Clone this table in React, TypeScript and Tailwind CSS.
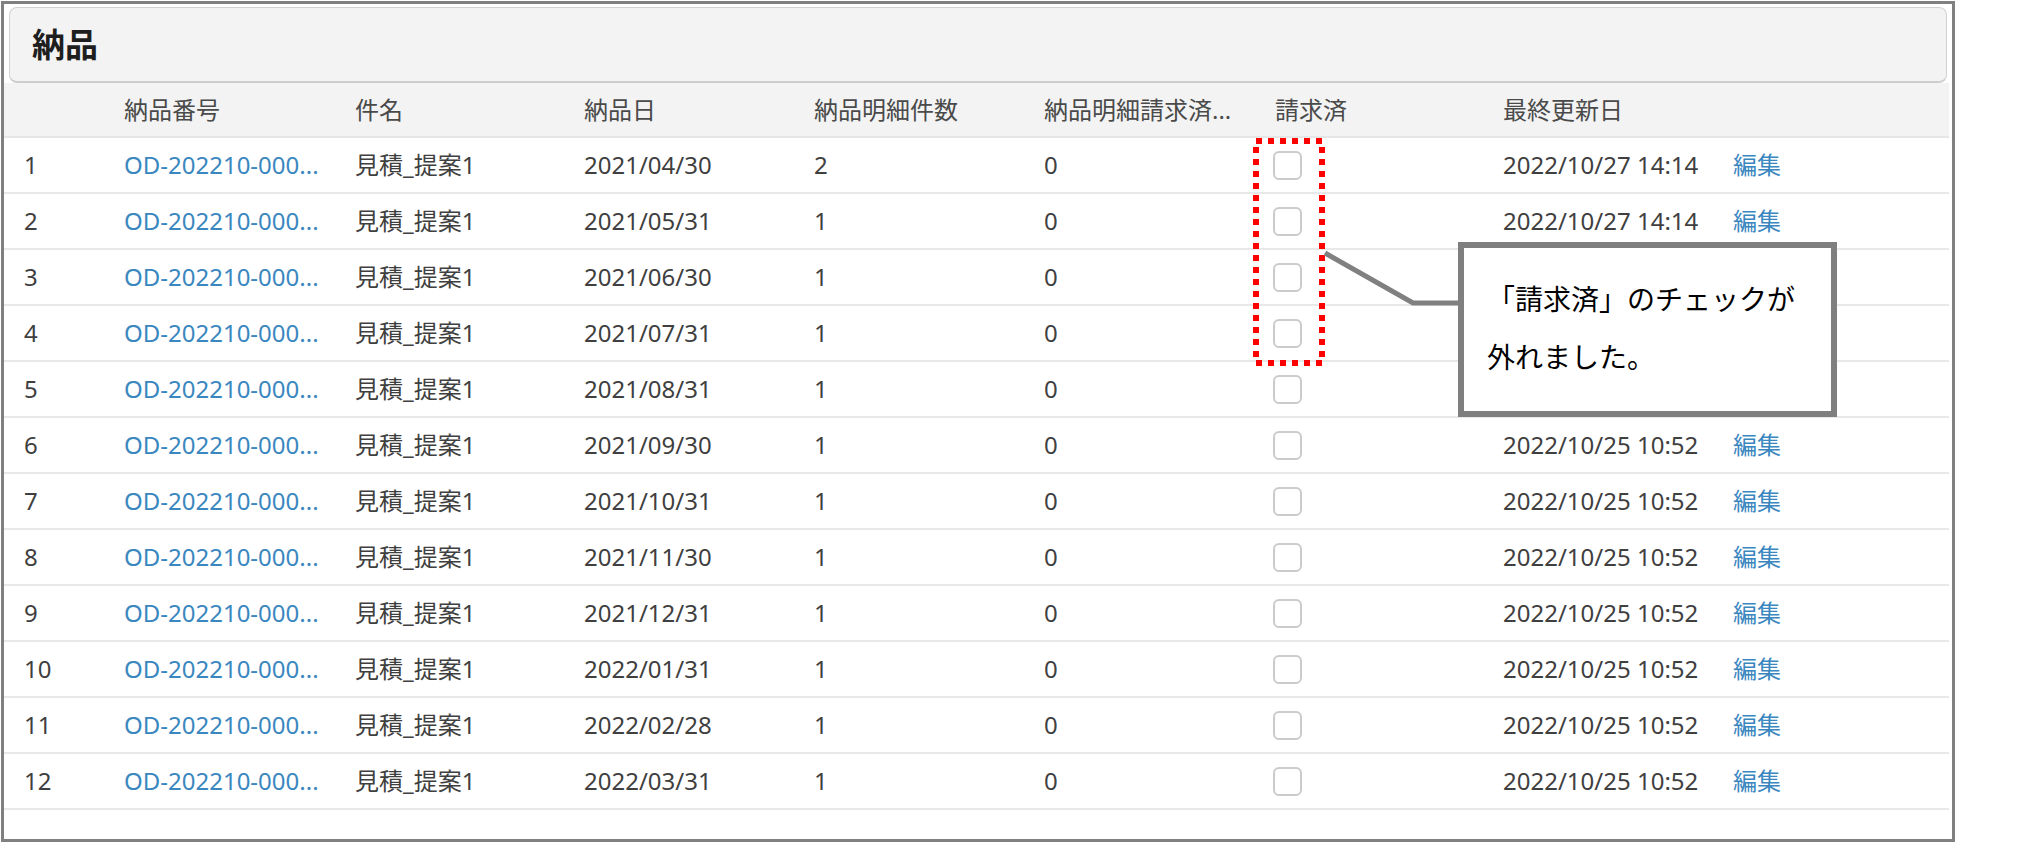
import React from "react";

const rows = [
  { n: 1, date: "2021/04/30", cnt: "2", upd: "2022/10/27 14:14", hidden: false },
  { n: 2, date: "2021/05/31", cnt: "1", upd: "2022/10/27 14:14", hidden: false },
  { n: 3, date: "2021/06/30", cnt: "1", upd: "2022/10/27 14:14", hidden: true },
  { n: 4, date: "2021/07/31", cnt: "1", upd: "2022/10/27 14:14", hidden: true },
  { n: 5, date: "2021/08/31", cnt: "1", upd: "2022/10/25 10:52", hidden: true },
  { n: 6, date: "2021/09/30", cnt: "1", upd: "2022/10/25 10:52", hidden: false },
  { n: 7, date: "2021/10/31", cnt: "1", upd: "2022/10/25 10:52", hidden: false },
  { n: 8, date: "2021/11/30", cnt: "1", upd: "2022/10/25 10:52", hidden: false },
  { n: 9, date: "2021/12/31", cnt: "1", upd: "2022/10/25 10:52", hidden: false },
  { n: 10, date: "2022/01/31", cnt: "1", upd: "2022/10/25 10:52", hidden: false },
  { n: 11, date: "2022/02/28", cnt: "1", upd: "2022/10/25 10:52", hidden: false },
  { n: 12, date: "2022/03/31", cnt: "1", upd: "2022/10/25 10:52", hidden: false },
];

const grid =
  "grid grid-cols-[100px_231px_229px_230px_230px_229px_230px_230px_1fr] items-center pl-[20px]";

export default function App() {
  return (
    <div className="relative w-[2027px] h-[848px] bg-white font-['Noto_Sans','Noto_Sans_CJK_JP',sans-serif] overflow-hidden">
      <div className="ml-px mt-px w-[1954px] h-[841px] border-[3px] border-[#808080] flex flex-col">
        <div className="mt-[3px] ml-[5px] mr-[5px] h-[76px] rounded-[8px] border border-[#d2d2d2] border-b-2 border-b-[#cdcdcd] bg-[#f3f3f3] flex items-center pl-[22px]">
          <span className="text-[33px] font-bold text-[#1e1e1e] leading-none">納品</span>
        </div>
        <div className="mr-[3px] flex flex-col">
          <div className={`${grid} h-[55px] bg-[#f3f3f3] border-b-2 border-[#e6e6e6] text-[24px] text-[#4a4a4a]`}>
            <span></span>
            <span>納品番号</span>
            <span>件名</span>
            <span>納品日</span>
            <span>納品明細件数</span>
            <span>納品明細請求済...</span>
            <span className="pl-[2px]">請求済</span>
            <span>最終更新日</span>
            <span></span>
          </div>
          {rows.map((r) => (
            <div
              key={r.n}
              className={`${grid} h-[56px] border-b-2 border-[#e8e8e8] text-[24px] text-[#3f3f3f] whitespace-nowrap`}
            >
              <span>{r.n}</span>
              <span className="text-[#3a87bf]">OD-202210-000...</span>
              <span>見積_提案1</span>
              <span>{r.date}</span>
              <span>{r.cnt}</span>
              <span>0</span>
              <span>
                <span className="block w-[29px] h-[29px] rounded-[6px] border-2 border-[#cbcbcb] bg-white" />
              </span>
              <span className={r.hidden ? "invisible" : ""}>{r.upd}</span>
              <span className={r.hidden ? "invisible text-[#3a87bf]" : "text-[#3a87bf]"}>編集</span>
            </div>
          ))}
        </div>
      </div>

      {/* red dotted highlight */}
      <svg className="absolute left-[1253px] top-[138px]" width="72" height="228" viewBox="0 0 72 228">
        <rect x="3" y="3" width="66" height="222" fill="none" stroke="#ff0000" strokeWidth="6" strokeDasharray="6 6" />
      </svg>

      {/* connector */}
      <svg className="absolute left-0 top-0 pointer-events-none" width="2027" height="848">
        <polyline points="1325,253 1413,303 1460,303" fill="none" stroke="#808080" strokeWidth="5" />
      </svg>

      {/* callout */}
      <div className="absolute left-[1458px] top-[242px] w-[379px] h-[175px] border-[6px] border-[#7f7f7f] bg-white pl-[23px] pt-[21px] text-[28px] leading-[58px] text-black font-['Noto_Sans_CJK_JP',sans-serif]">
        <div>「請求済」のチェックが</div>
        <div>外れました。</div>
      </div>
    </div>
  );
}
